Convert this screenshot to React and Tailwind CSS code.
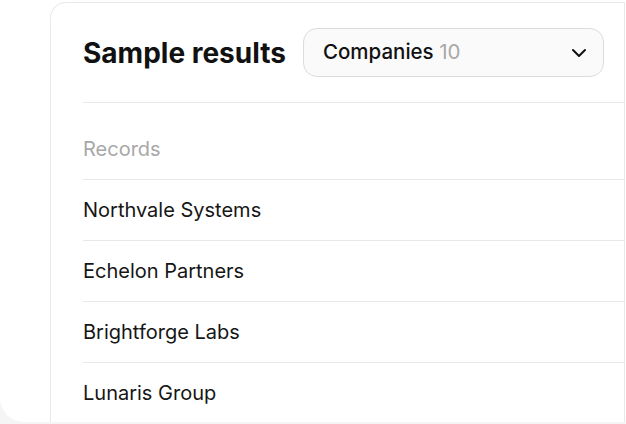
import React from "react";

const rows = ["Northvale Systems", "Echelon Partners", "Brightforge Labs", "Lunaris Group"];

export default function App() {
  return (
    <div className="w-[626px] h-[424px] overflow-hidden bg-[#f5f5f5]" style={{ fontFamily: "Inter, 'Noto Sans', sans-serif" }}>
      <div className="h-[422px] bg-white rounded-bl-[24px] pl-[50px] pt-[2px] pr-[1px]">
        <div className="h-full bg-white border border-b-0 border-[#e8e8e8] rounded-tl-[16px]">
          <div className="flex items-center pl-[32px] pr-[20px] pt-[25px] pb-[25px]">
            <h1 className="text-[28px] leading-[34px] font-bold text-[#111]">Sample results</h1>
            <button className="ml-[17px] flex-1 h-[49px] flex items-center justify-between pl-[19px] pr-[16px] rounded-[14px] border border-[#dcdcdc] bg-[#fafafa]">
              <span className="text-[20.5px] font-medium text-[#111]">
                Companies <span className="text-[#a8a8a8] font-normal">10</span>
              </span>
              <svg width="16" height="10" viewBox="0 0 16 10" fill="none" stroke="#111" strokeWidth="2" strokeLinecap="round" strokeLinejoin="round">
                <polyline points="2,2 8,8 14,2" />
              </svg>
            </button>
          </div>
          <div className="ml-[32px]">
            <div className="border-t border-[#e8e8e8] pt-[34px] pb-[18px] text-[20px] leading-[24px] text-[#a8a8a8]">Records</div>
            {rows.map((r) => (
              <div key={r} className="border-t border-[#e8e8e8] h-[61px] flex items-center text-[20px] text-[#161616]">
                {r}
              </div>
            ))}
          </div>
        </div>
      </div>
    </div>
  );
}
